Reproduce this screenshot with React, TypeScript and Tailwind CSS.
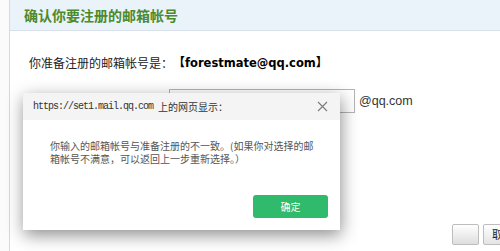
export default function App() {
  const cjk = '"Noto Sans CJK SC", "Liberation Sans", sans-serif';
  return (
    <div
      className="relative w-[500px] h-[251px] overflow-hidden bg-white flex"
      style={{ fontFamily: cjk }}
    >
      {/* left gutter */}
      <div className="w-[10px] shrink-0 bg-[#fbfbfb] border-r border-[#d9d9d9]" />

      <main className="flex-1 flex flex-col">
        {/* Header */}
        <header className="h-[31px] shrink-0 bg-[#eaf2fa] border-b border-[#d8e0ea] pl-[14px] flex items-center">
          <h1 className="text-[14px] font-bold text-[#4d8a2a]">
            确认你要注册的邮箱帐号
          </h1>
        </header>

        {/* Content */}
        <div className="pl-[19px] mt-[24px] h-[16px] flex items-center text-[12px] text-[#222]">
          <span>你准备注册的邮箱帐号是：</span>
          <span className="font-bold text-[12px] text-black">
            【<span className="font-['DejaVu_Sans',sans-serif] text-[11.5px]">forestmate@qq.com</span>】
          </span>
        </div>

        <div className="mt-[18px] flex items-center">
          <div className="ml-[159px] w-[186px] h-[24px] border border-[#b4b4b4] bg-white" />
          <span className="ml-[4px] text-[12.5px] text-[#333] font-['Liberation_Sans',sans-serif]">
            @qq.com
          </span>
        </div>

        {/* Bottom buttons */}
        <div className="mt-[111px] pl-[442px] flex gap-[4px]">
          <div className="w-[27px] h-[21px] shrink-0 rounded-[2px] border border-[#bdbdbd] bg-gradient-to-b from-white to-[#dedede]" />
          <div className="w-[40px] h-[21px] shrink-0 rounded-[2px] border border-[#bdbdbd] bg-gradient-to-b from-white to-[#e4e4e4] pl-[8px] text-[11px] leading-[19px] text-[#222]">
            取消
          </div>
        </div>
      </main>

      {/* Alert dialog */}
      <div className="absolute left-[23px] top-[93px] w-[317px] h-[137px] bg-white shadow-[1px_5px_16px_rgba(0,0,0,0.45)] flex flex-col">
        <div className="h-[27px] bg-[#f4f4f4] flex items-center pl-[10px] pr-[10px]">
          <span className="text-[10px] text-[#333] font-['Liberation_Mono',monospace] tracking-[-1px]">
            https://set1.mail.qq.com
          </span>
          <span className="ml-[5px] text-[10px] text-[#333]">上的网页显示：</span>
          <svg className="ml-auto mr-[2px]" width="11" height="11" viewBox="0 0 11 11">
            <path d="M1 1L10 10M10 1L1 10" stroke="#7a7a7a" strokeWidth="1.1" fill="none" />
          </svg>
        </div>
        <div className="pl-[27px] pr-[24px] pt-[20px] text-[10px] leading-[12.5px] text-[#555]">
          你输入的邮箱帐号与准备注册的不一致。(如果你对选择的邮
          <br />
          箱帐号不满意，可以返回上一步重新选择。）
        </div>
        <div className="mt-auto mb-[12px] flex justify-end pr-[12px]">
          <div className="w-[75px] h-[23px] rounded-[3px] bg-[#2fbb6b] text-white text-[10px] flex items-center justify-center">
            确定
          </div>
        </div>
      </div>
    </div>
  );
}
